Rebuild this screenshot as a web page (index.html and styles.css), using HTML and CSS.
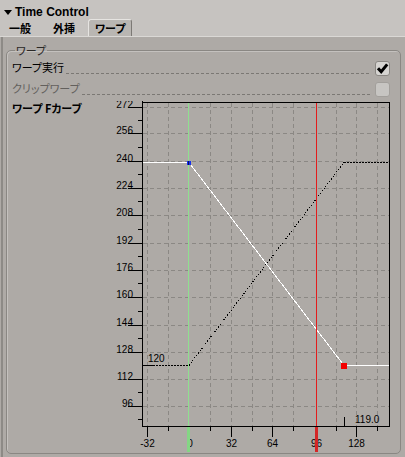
FILE: index.html
```html
<!DOCTYPE html>
<html lang="ja">
<head>
<meta charset="utf-8">
<title>Time Control</title>
<link rel="stylesheet" href="styles.css">
</head>
<body>
<div class="header">
  <div class="title">
    <svg class="tri" width="8" height="5" viewBox="0 0 8 5"><path d="M0 0H8L4 5Z" fill="#000"/></svg>
    <span>Time Control</span>
  </div>
  <div class="tabs">
    <span class="tab">一般</span>
    <span class="tab">外挿</span>
    <span class="tab active">ワープ</span>
  </div>
</div>
<div class="main">
  <fieldset class="group">
    <legend>ワープ</legend>
    <div class="row">
      <span class="lbl">ワープ実行</span>
      <span class="leader"></span>
      <span class="cb"><svg width="13" height="13" viewBox="0 0 13 13"><path d="M2 6.2 L5.2 9.8 L11.2 2.4" fill="none" stroke="#000" stroke-width="3" stroke-linejoin="miter"/></svg></span>
    </div>
    <div class="row disabled">
      <span class="lbl">クリップワープ</span>
      <span class="leader"></span>
      <span class="cb off"></span>
    </div>
    <div class="curve">
      <div class="curve-label">ワープ Fカーブ</div>
      <svg class="chart" width="290" height="351" viewBox="100 101 290 351">
        <g stroke="#8b8884" stroke-dasharray="4 3" shape-rendering="crispEdges">
          <line x1="143" x2="389" y1="107.5" y2="107.5"/>
          <line x1="143" x2="389" y1="133.5" y2="133.5"/>
          <line x1="143" x2="389" y1="161.5" y2="161.5"/>
          <line x1="143" x2="389" y1="188.5" y2="188.5"/>
          <line x1="143" x2="389" y1="215.5" y2="215.5"/>
          <line x1="143" x2="389" y1="243.5" y2="243.5"/>
          <line x1="143" x2="389" y1="270.5" y2="270.5"/>
          <line x1="143" x2="389" y1="297.5" y2="297.5"/>
          <line x1="143" x2="389" y1="325.5" y2="325.5"/>
          <line x1="143" x2="389" y1="352.5" y2="352.5"/>
          <line x1="143" x2="389" y1="379.5" y2="379.5"/>
          <line x1="143" x2="389" y1="406.5" y2="406.5"/>
          <line y1="103" y2="426" x1="147.5" x2="147.5"/>
          <line y1="103" y2="426" x1="168.5" x2="168.5"/>
          <line y1="103" y2="426" x1="210.5" x2="210.5"/>
          <line y1="103" y2="426" x1="231.5" x2="231.5"/>
          <line y1="103" y2="426" x1="252.5" x2="252.5"/>
          <line y1="103" y2="426" x1="272.5" x2="272.5"/>
          <line y1="103" y2="426" x1="293.5" x2="293.5"/>
          <line y1="103" y2="426" x1="336.5" x2="336.5"/>
          <line y1="103" y2="426" x1="356.5" x2="356.5"/>
          <line y1="103" y2="426" x1="377.5" x2="377.5"/>
        </g>
        <g stroke="#000" shape-rendering="crispEdges">
          <line x1="142.5" x2="142.5" y1="101" y2="427"/>
          <line x1="142" x2="390" y1="102.5" y2="102.5"/>
          <line x1="389.5" x2="389.5" y1="102" y2="427"/>
          <line x1="142" x2="390" y1="426.5" y2="426.5"/>
          <line x1="128" x2="142" y1="107.5" y2="107.5"/>
          <line x1="128" x2="142" y1="133.5" y2="133.5"/>
          <line x1="128" x2="142" y1="161.5" y2="161.5"/>
          <line x1="128" x2="142" y1="188.5" y2="188.5"/>
          <line x1="128" x2="142" y1="215.5" y2="215.5"/>
          <line x1="128" x2="142" y1="243.5" y2="243.5"/>
          <line x1="128" x2="142" y1="270.5" y2="270.5"/>
          <line x1="128" x2="142" y1="297.5" y2="297.5"/>
          <line x1="128" x2="142" y1="325.5" y2="325.5"/>
          <line x1="128" x2="142" y1="352.5" y2="352.5"/>
          <line x1="128" x2="142" y1="379.5" y2="379.5"/>
          <line x1="128" x2="142" y1="406.5" y2="406.5"/>
          <line x1="138" x2="142" y1="120.5" y2="120.5"/>
          <line x1="138" x2="142" y1="147.5" y2="147.5"/>
          <line x1="138" x2="142" y1="174.5" y2="174.5"/>
          <line x1="138" x2="142" y1="201.5" y2="201.5"/>
          <line x1="138" x2="142" y1="229.5" y2="229.5"/>
          <line x1="138" x2="142" y1="256.5" y2="256.5"/>
          <line x1="138" x2="142" y1="283.5" y2="283.5"/>
          <line x1="138" x2="142" y1="311.5" y2="311.5"/>
          <line x1="138" x2="142" y1="338.5" y2="338.5"/>
          <line x1="138" x2="142" y1="392.5" y2="392.5"/>
          <line x1="138" x2="142" y1="419.5" y2="419.5"/>
          <line y1="427" y2="437" x1="147.5" x2="147.5"/>
          <line y1="427" y2="437" x1="189.5" x2="189.5"/>
          <line y1="427" y2="437" x1="231.5" x2="231.5"/>
          <line y1="427" y2="437" x1="272.5" x2="272.5"/>
          <line y1="427" y2="437" x1="316.5" x2="316.5"/>
          <line y1="427" y2="437" x1="356.5" x2="356.5"/>
          <line y1="427" y2="431" x1="168.5" x2="168.5"/>
          <line y1="427" y2="431" x1="210.5" x2="210.5"/>
          <line y1="427" y2="431" x1="252.5" x2="252.5"/>
          <line y1="427" y2="431" x1="293.5" x2="293.5"/>
          <line y1="427" y2="431" x1="336.5" x2="336.5"/>
          <line y1="427" y2="431" x1="377.5" x2="377.5"/>
          <line y1="417" y2="426" x1="344.5" x2="344.5"/>
        </g>
        <g class="axis-y">
          <text x="133" y="108">272</text>
          <text x="133" y="134">256</text>
          <text x="133" y="162">240</text>
          <text x="133" y="189">224</text>
          <text x="133" y="216">208</text>
          <text x="133" y="244">192</text>
          <text x="133" y="271">176</text>
          <text x="133" y="298">160</text>
          <text x="133" y="326">144</text>
          <text x="133" y="353">128</text>
          <text x="133" y="380">112</text>
          <text x="133" y="407">96</text>
        </g>
        <g class="axis-x">
          <text x="147.5" y="447">-32</text>
          <text x="190" y="447">0</text>
          <text x="231.5" y="447">32</text>
          <text x="272.5" y="447">64</text>
          <text x="316.5" y="447">96</text>
          <text x="356.5" y="447">128</text>
        </g>
        <text class="val" x="355" y="423">119.0</text>
        <text class="val" x="148" y="362">120</text>
        <g fill="none" shape-rendering="crispEdges">
          <polyline points="143,162.5 189,162.5 344,365.5 389,365.5" stroke="#fff"/>
          <line x1="143" x2="153" y1="365.5" y2="365.5" stroke="#000"/>
          <line x1="153" x2="189" y1="365.5" y2="365.5" stroke="#000" stroke-dasharray="2 1"/>
          <line x1="189" x2="344" y1="365.5" y2="162.5" stroke="#000" stroke-dasharray="1.2 1.8"/>
          <line x1="344" x2="389" y1="162.5" y2="162.5" stroke="#000" stroke-dasharray="2 1"/>
          <line x1="188.5" x2="188.5" y1="103" y2="426" stroke="#8fe08f"/>
          <line x1="316.5" x2="316.5" y1="103" y2="426" stroke="#e41c1c"/>
        </g>
        <g shape-rendering="crispEdges">
          <rect x="187" y="161" width="4" height="4" fill="#1431ee"/>
          <rect x="188" y="161" width="1" height="4" fill="#10105a"/>
          <rect x="341" y="363" width="6" height="6" fill="#f40000"/>
          <rect x="187" y="427" width="3" height="25" fill="#84d684"/>
          <rect x="315" y="427" width="3" height="25" fill="#d42626"/>
        </g>
      </svg>
    </div>
  </fieldset>
</div>
</body>
</html>
```

FILE: styles.css
```css
html, body {
  margin: 0;
  padding: 0;
}

body {
  width: 405px;
  height: 457px;
  overflow: hidden;
  background: #aeaaa6;
  font-family: "Noto Sans CJK JP", "Noto Sans", sans-serif;
  font-size: 11px;
  color: #000;
  font-feature-settings: "palt";
}

.header {
  height: 36px;
  background: #c6c3c0;
  border-bottom: 1px solid #dad8d5;
}

.title {
  display: flex;
  align-items: center;
  height: 14px;
  line-height: 14px;
  padding-top: 5px;
  padding-left: 4px;
  font-family: "Liberation Sans", Arial, sans-serif;
  font-weight: bold;
  font-size: 12px;
}

.tri {
  margin-right: 3px;
}

.tabs {
  display: flex;
  height: 17px;
  padding-left: 2px;
}

.tab {
  height: 16px;
  line-height: 16px;
  padding: 0 6px;
  margin-right: 8px;
  font-weight: bold;
  border: 1px solid transparent;
  border-bottom: none;
}

.tab.active {
  margin-left: -2px;
  background: #b9b6b2;
  border-color: #e6e4e1 #7c7975 transparent #e6e4e1;
  border-radius: 3px 3px 0 0;
}

.main {
  margin-left: 1px;
  border-left: 2px solid #8d8a86;
  height: 420px;
  padding-top: 6px;
  box-sizing: border-box;
}

.group {
  margin: 0 4px 0 3px;
  padding: 0 10px 1px 5px;
  min-width: 0;
  border: 1px solid #8a8783;
  border-radius: 5px;
  box-shadow: inset 1px 1px 0 #c4c1be;
}

.group legend {
  margin-left: 3px;
  padding: 0 1px;
  line-height: 15px;
  font-size: 11px;
  color: #2a2826;
}

.row {
  display: flex;
  align-items: flex-start;
  height: 21px;
}

.lbl {
  line-height: 15px;
  margin-top: 2px;
  white-space: nowrap;
}

.leader {
  flex: 1;
  height: 1px;
  margin: 15px 5px 0 2px;
  background: repeating-linear-gradient(to right, #7b7874 0 3px, transparent 3px 5px);
}

.row.disabled .lbl {
  color: #63605d;
}

.cb {
  width: 15px;
  height: 15px;
  margin-top: 3px;
  box-sizing: border-box;
  border: 1px solid #8a8783;
  border-radius: 3px;
  background: #d6d4d1;
  display: flex;
  align-items: center;
  justify-content: center;
}

.cb.off {
  border-color: #a29f9b;
  background: #c7c5c2;
}

.curve {
  display: flex;
  margin-top: 1px;
  height: 351px;
}

.curve-label {
  width: 88px;
  line-height: 15px;
  font-weight: bold;
  white-space: nowrap;
}

.chart {
  display: block;
  overflow: hidden;
}

.chart text {
  font-family: "Liberation Sans", Arial, sans-serif;
  font-size: 10px;
  fill: #000;
}

.axis-y text {
  text-anchor: end;
}

.axis-x text {
  text-anchor: middle;
}
```
